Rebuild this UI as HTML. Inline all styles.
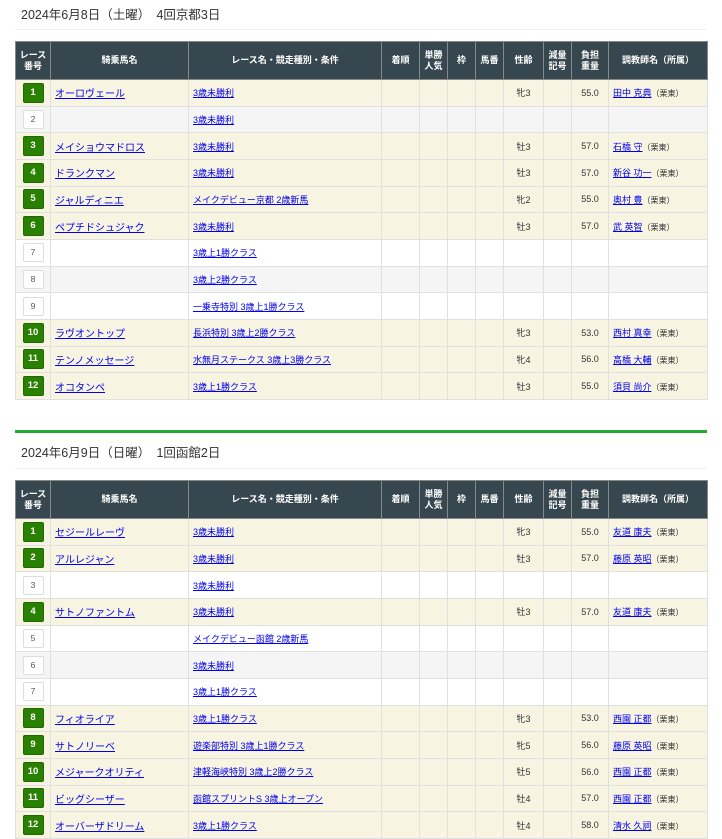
<!DOCTYPE html><html><head><meta charset="utf-8"><style>
body{margin:0;background:#fff;font-family:"Liberation Sans","Noto Sans CJK JP",sans-serif;color:#333;width:722px;height:835px;overflow:hidden;position:relative}
.t{position:absolute;left:21px;font-size:12.5px;color:#333}
.sep{position:absolute;left:15px;width:692px;height:1px;background:#eee}
.g{position:absolute;left:15px;width:692px;height:3px;background:#22aa33}
table{position:absolute;left:15px;width:693px;border-collapse:collapse;table-layout:fixed;font-size:9px}
th{background:#37474f;color:#fff;font-weight:bold;border:1px solid #888;height:37px;padding:0;line-height:11px;font-size:9px}
td{border:1px solid #e0e0e0;height:25.67px;padding:0;text-align:center;white-space:nowrap;overflow:hidden}
tr.c td{background:#f8f4e2}
tr.w td{background:#fff}
tr.s td{background:#f5f5f5}
td.l{text-align:left;padding-left:4px}
a{color:#0000ee;text-decoration:underline}
.h a{font-size:10px}
.b{display:inline-block;width:19px;height:18px;line-height:18px;background:#2a8000;color:#fff;font-weight:bold;font-size:9.5px;border-radius:2px;border:1px solid #1f6a00}
.e{display:inline-block;width:19px;height:17px;line-height:17px;background:#fff;color:#555;font-size:8.5px;border:1px solid #ddd;border-radius:2px}
small{font-size:8px;color:#333}
</style></head><body>
<div class="t" style="top:4px">2024年6月8日（土曜）　4回京都3日</div>
<div class="sep" style="top:29px"></div>
<table style="top:41px">
<colgroup><col style="width:35px"><col style="width:138px"><col style="width:193px"><col style="width:38px"><col style="width:28px"><col style="width:28px"><col style="width:28px"><col style="width:40px"><col style="width:28px"><col style="width:37px"><col style="width:99px"></colgroup>
<tr><th>レース<br>番号</th><th>騎乗馬名</th><th>レース名・競走種別・条件</th><th>着順</th><th>単勝<br>人気</th><th>枠</th><th>馬番</th><th>性齢</th><th>減量<br>記号</th><th>負担<br>重量</th><th>調教師名（所属）</th></tr>
<tr class="c"><td><span class="b">1</span></td><td class="l h"><a>オーロヴェール</a></td><td class="l"><a>3歳未勝利</a></td><td></td><td></td><td></td><td></td><td>牝3</td><td></td><td>55.0</td><td class="l"><a>田中 克典</a><small>（栗東）</small></td></tr>
<tr class="s"><td><span class="e">2</span></td><td></td><td class="l"><a>3歳未勝利</a></td><td></td><td></td><td></td><td></td><td></td><td></td><td></td><td></td></tr>
<tr class="c"><td><span class="b">3</span></td><td class="l h"><a>メイショウマドロス</a></td><td class="l"><a>3歳未勝利</a></td><td></td><td></td><td></td><td></td><td>牡3</td><td></td><td>57.0</td><td class="l"><a>石橋 守</a><small>（栗東）</small></td></tr>
<tr class="c"><td><span class="b">4</span></td><td class="l h"><a>ドランクマン</a></td><td class="l"><a>3歳未勝利</a></td><td></td><td></td><td></td><td></td><td>牡3</td><td></td><td>57.0</td><td class="l"><a>新谷 功一</a><small>（栗東）</small></td></tr>
<tr class="c"><td><span class="b">5</span></td><td class="l h"><a>ジャルディニエ</a></td><td class="l"><a>メイクデビュー京都 2歳新馬</a></td><td></td><td></td><td></td><td></td><td>牝2</td><td></td><td>55.0</td><td class="l"><a>奥村 豊</a><small>（栗東）</small></td></tr>
<tr class="c"><td><span class="b">6</span></td><td class="l h"><a>ペプチドシュジャク</a></td><td class="l"><a>3歳未勝利</a></td><td></td><td></td><td></td><td></td><td>牡3</td><td></td><td>57.0</td><td class="l"><a>武 英智</a><small>（栗東）</small></td></tr>
<tr class="w"><td><span class="e">7</span></td><td></td><td class="l"><a>3歳上1勝クラス</a></td><td></td><td></td><td></td><td></td><td></td><td></td><td></td><td></td></tr>
<tr class="s"><td><span class="e">8</span></td><td></td><td class="l"><a>3歳上2勝クラス</a></td><td></td><td></td><td></td><td></td><td></td><td></td><td></td><td></td></tr>
<tr class="w"><td><span class="e">9</span></td><td></td><td class="l"><a>一乗寺特別 3歳上1勝クラス</a></td><td></td><td></td><td></td><td></td><td></td><td></td><td></td><td></td></tr>
<tr class="c"><td><span class="b">10</span></td><td class="l h"><a>ラヴオントップ</a></td><td class="l"><a>長浜特別 3歳上2勝クラス</a></td><td></td><td></td><td></td><td></td><td>牝3</td><td></td><td>53.0</td><td class="l"><a>西村 真幸</a><small>（栗東）</small></td></tr>
<tr class="c"><td><span class="b">11</span></td><td class="l h"><a>テンノメッセージ</a></td><td class="l"><a>水無月ステークス 3歳上3勝クラス</a></td><td></td><td></td><td></td><td></td><td>牝4</td><td></td><td>56.0</td><td class="l"><a>高橋 大輔</a><small>（栗東）</small></td></tr>
<tr class="c"><td><span class="b">12</span></td><td class="l h"><a>オコタンペ</a></td><td class="l"><a>3歳上1勝クラス</a></td><td></td><td></td><td></td><td></td><td>牡3</td><td></td><td>55.0</td><td class="l"><a>須貝 尚介</a><small>（栗東）</small></td></tr>
</table>
<div class="g" style="top:430px"></div>
<div class="t" style="top:442px">2024年6月9日（日曜）　1回函館2日</div>
<div class="sep" style="top:468px"></div>
<table style="top:480px">
<colgroup><col style="width:35px"><col style="width:138px"><col style="width:193px"><col style="width:38px"><col style="width:28px"><col style="width:28px"><col style="width:28px"><col style="width:40px"><col style="width:28px"><col style="width:37px"><col style="width:99px"></colgroup>
<tr><th>レース<br>番号</th><th>騎乗馬名</th><th>レース名・競走種別・条件</th><th>着順</th><th>単勝<br>人気</th><th>枠</th><th>馬番</th><th>性齢</th><th>減量<br>記号</th><th>負担<br>重量</th><th>調教師名（所属）</th></tr>
<tr class="c"><td><span class="b">1</span></td><td class="l h"><a>セジールレーヴ</a></td><td class="l"><a>3歳未勝利</a></td><td></td><td></td><td></td><td></td><td>牝3</td><td></td><td>55.0</td><td class="l"><a>友道 康夫</a><small>（栗東）</small></td></tr>
<tr class="c"><td><span class="b">2</span></td><td class="l h"><a>アルレジャン</a></td><td class="l"><a>3歳未勝利</a></td><td></td><td></td><td></td><td></td><td>牡3</td><td></td><td>57.0</td><td class="l"><a>藤原 英昭</a><small>（栗東）</small></td></tr>
<tr class="w"><td><span class="e">3</span></td><td></td><td class="l"><a>3歳未勝利</a></td><td></td><td></td><td></td><td></td><td></td><td></td><td></td><td></td></tr>
<tr class="c"><td><span class="b">4</span></td><td class="l h"><a>サトノファントム</a></td><td class="l"><a>3歳未勝利</a></td><td></td><td></td><td></td><td></td><td>牡3</td><td></td><td>57.0</td><td class="l"><a>友道 康夫</a><small>（栗東）</small></td></tr>
<tr class="w"><td><span class="e">5</span></td><td></td><td class="l"><a>メイクデビュー函館 2歳新馬</a></td><td></td><td></td><td></td><td></td><td></td><td></td><td></td><td></td></tr>
<tr class="s"><td><span class="e">6</span></td><td></td><td class="l"><a>3歳未勝利</a></td><td></td><td></td><td></td><td></td><td></td><td></td><td></td><td></td></tr>
<tr class="w"><td><span class="e">7</span></td><td></td><td class="l"><a>3歳上1勝クラス</a></td><td></td><td></td><td></td><td></td><td></td><td></td><td></td><td></td></tr>
<tr class="c"><td><span class="b">8</span></td><td class="l h"><a>フィオライア</a></td><td class="l"><a>3歳上1勝クラス</a></td><td></td><td></td><td></td><td></td><td>牝3</td><td></td><td>53.0</td><td class="l"><a>西園 正都</a><small>（栗東）</small></td></tr>
<tr class="c"><td><span class="b">9</span></td><td class="l h"><a>サトノリーベ</a></td><td class="l"><a>遊楽部特別 3歳上1勝クラス</a></td><td></td><td></td><td></td><td></td><td>牝5</td><td></td><td>56.0</td><td class="l"><a>藤原 英昭</a><small>（栗東）</small></td></tr>
<tr class="c"><td><span class="b">10</span></td><td class="l h"><a>メジャークオリティ</a></td><td class="l"><a>津軽海峡特別 3歳上2勝クラス</a></td><td></td><td></td><td></td><td></td><td>牡5</td><td></td><td>56.0</td><td class="l"><a>西園 正都</a><small>（栗東）</small></td></tr>
<tr class="c"><td><span class="b">11</span></td><td class="l h"><a>ビッグシーザー</a></td><td class="l"><a>函館スプリントS 3歳上オープン</a></td><td></td><td></td><td></td><td></td><td>牡4</td><td></td><td>57.0</td><td class="l"><a>西園 正都</a><small>（栗東）</small></td></tr>
<tr class="c"><td><span class="b">12</span></td><td class="l h"><a>オーバーザドリーム</a></td><td class="l"><a>3歳上1勝クラス</a></td><td></td><td></td><td></td><td></td><td>牡4</td><td></td><td>58.0</td><td class="l"><a>清水 久詞</a><small>（栗東）</small></td></tr>
</table>
</body></html>
